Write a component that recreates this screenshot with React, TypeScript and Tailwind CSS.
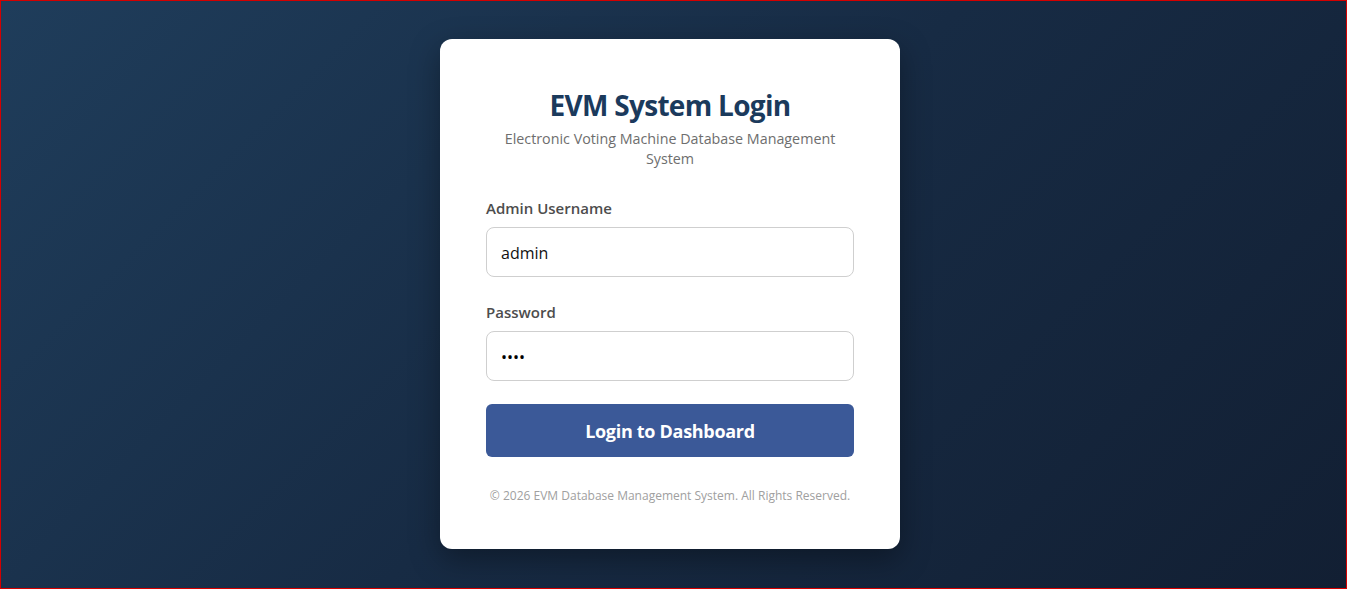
import React from "react";

export default function App() {
  return (
    <div
      className="w-[1347px] h-[589px] border border-[#d40000] bg-[linear-gradient(135deg,#1f3d5b_0%,#172b44_50%,#121f33_100%)] flex items-center justify-center pr-[7px] pb-[2px]"
      style={{ fontFamily: '"Open Sans", "Noto Sans", sans-serif' }}
    >
      <div className="w-[460px] h-[510px] bg-white rounded-[12px] shadow-[0_10px_30px_rgba(0,0,0,0.35)] px-[46px] pt-[49px] flex flex-col">
        <h1 className="text-[28px] leading-[34px] font-bold tracking-[-0.7px] text-[#1b3a5c] text-center">
          EVM System Login
        </h1>
        <p className="mt-[7px] text-[14.3px] leading-[20px] text-[#6e6e6e] text-center px-[6px]">
          Electronic Voting Machine Database Management System
        </p>
        <label className="mt-[29px] text-[15px] leading-[20px] font-semibold text-[#4d4d4d]">
          Admin Username
        </label>
        <input
          className="mt-[9px] h-[50px] w-full border border-[#cfcfcf] rounded-[8px] px-[14px] pt-[2px] text-[16px] text-[#111] outline-none"
          defaultValue="admin"
          type="text"
        />
        <label className="mt-[25px] text-[15px] leading-[20px] font-semibold text-[#4d4d4d]">
          Password
        </label>
        <input
          className="mt-[9px] h-[50px] w-full border border-[#cfcfcf] rounded-[8px] px-[14px] pt-[2px] text-[16px] text-black outline-none"
          defaultValue="1234"
          type="password"
        />
        <button className="mt-[23px] h-[53px] w-full rounded-[6px] bg-[#3b5998] pt-[2px] text-white text-[18px] font-bold tracking-[-0.3px]">
          Login to Dashboard
        </button>
        <p className="mt-[31px] text-[12px] leading-[16px] text-[#a0a0a0] text-center">
          © 2026 EVM Database Management System. All Rights Reserved.
        </p>
      </div>
    </div>
  );
}
